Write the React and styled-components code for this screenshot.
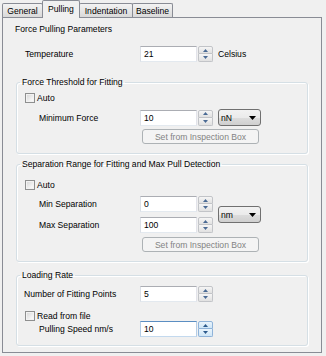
import React from "react";
import styled, { createGlobalStyle } from "styled-components";

const GlobalStyle = createGlobalStyle`
  html, body {
    margin: 0;
    padding: 0;
    background: #f0f0f0;
  }
  body {
    font-family: "Liberation Sans", Arial, sans-serif;
    font-size: 8.6px;
    color: #000;
  }
`;

const Window = styled.div`
  width: 326px;
  height: 356px;
  box-sizing: border-box;
  padding-left: 2px;
  overflow: hidden;
`;

const TabStrip = styled.div`
  display: flex;
  align-items: flex-end;
  height: 17px;
`;

const Tab = styled.div`
  box-sizing: border-box;
  width: ${p => p.w}px;
  height: ${p => (p.active ? 18 : 14)}px;
  margin-bottom: ${p => (p.active ? -1 : 0)}px;
  margin-left: ${p => (p.first ? 0 : -1)}px;
  border: 1px solid #898c95;
  border-bottom: none;
  border-radius: 2px 2px 0 0;
  background: ${p =>
    p.active ? "#f0f0f0" : "linear-gradient(#f3f3f3, #e6e6e6 50%, #d9d9d9)"};
  position: relative;
  z-index: ${p => (p.active ? 2 : 1)};
  display: flex;
  align-items: center;
  justify-content: center;
  padding-bottom: ${p => (p.active ? 2 : 0)}px;
  white-space: nowrap;
`;

const Panel = styled.div`
  box-sizing: border-box;
  width: 320px;
  height: 336px;
  border: 1px solid #898c95;
  background: #f0f0f0;
  padding-top: 5px;
`;

const SectionTitle = styled.div`
  padding-left: 12px;
  line-height: 12px;
`;

const Group = styled.fieldset`
  margin: ${p => p.mt}px 13px 0 13px;
  padding: 0 0 ${p => p.pb}px 0;
  border: 1px solid #d5dfe5;
  border-radius: 3px;
  box-shadow: inset 1px 1px 0 #fff, 1px 1px 0 #fff;
  min-width: 0;
`;

const Legend = styled.legend`
  margin-left: 3px;
  padding: 0 2px;
  line-height: 12px;
`;

const Row = styled.div`
  display: flex;
  align-items: center;
  height: ${p => p.h || 16}px;
  margin-top: ${p => p.mt || 0}px;
`;

const Label = styled.span`
  box-sizing: border-box;
  width: ${p => p.w}px;
  padding-left: ${p => p.indent}px;
  white-space: nowrap;
`;

const SpinBox = styled.div`
  display: flex;
  height: 16px;
`;

const SpinInput = styled.div`
  box-sizing: border-box;
  width: 57px;
  height: 16px;
  padding-left: 3px;
  line-height: 14px;
  background: #fff;
  border: 1px solid;
  border-color: ${p =>
    p.focused ? "#5b8ec2 #b5cde6 #c3d9ee #b5cde6" : "#abadb3 #e2e3ea #e3e9ef #dbdfe6"};
`;

const SpinButtons = styled.div`
  display: flex;
  flex-direction: column;
  width: 15px;
  margin-left: 1px;
  height: 16px;
`;

const SpinHalf = styled.div`
  box-sizing: border-box;
  height: 8px;
  border: 1px solid ${p => (p.focused ? "#8fb3d9" : "#c2c4c8")};
  border-top-width: ${p => (p.down ? 0 : 1)}px;
  border-radius: ${p => (p.down ? "0 0 2px 2px" : "2px 2px 0 0")};
  background: ${p =>
    p.focused
      ? "linear-gradient(#eaf4fc, #cfe6f7)"
      : "linear-gradient(#f6f6f6, #e1e1e1)"};
  display: flex;
  align-items: center;
  justify-content: center;
`;

const Unit = styled.span`
  margin-left: 5px;
`;

const Select = styled.div`
  box-sizing: border-box;
  width: 43px;
  height: 17px;
  margin-left: 5px;
  border: 1px solid #707070;
  border-radius: 3px;
  background: linear-gradient(#f2f2f2, #ebebeb 50%, #dddddd 51%, #cfcfcf);
  display: flex;
  align-items: center;
  justify-content: space-between;
  padding: 0 4px 0 2px;
`;

const Button = styled.div`
  box-sizing: border-box;
  width: 117px;
  height: 15px;
  margin: ${p => p.mt}px 0 0 125px;
  border: 1px solid #adb2b5;
  border-radius: 3px;
  background: #f4f4f4;
  color: #838383;
  display: flex;
  align-items: center;
  justify-content: center;
  white-space: nowrap;
`;

const CheckRow = styled.label`
  display: flex;
  align-items: center;
  height: ${p => p.h || 12}px;
  margin-top: ${p => p.mt}px;
  padding-left: 8px;
  gap: 2px;
`;

const CheckBox = styled.span`
  box-sizing: border-box;
  width: 10px;
  height: 10px;
  border: 1px solid #8e8f8f;
  background: linear-gradient(135deg, #d4d4d4, #f4f4f4 70%, #fff);
  box-shadow: inset 0 0 0 1px #f2f2f2;
`;

const PairRow = styled.div`
  display: flex;
  align-items: center;
  margin-top: ${p => p.mt}px;
`;

const PairColumn = styled.div`
  display: flex;
  flex-direction: column;
  gap: 5px;
`;

function Arrow({ down, focused }) {
  const c = focused ? "#2c5a8c" : "#4a6a94";
  return (
    <svg width="5" height="3" viewBox="0 0 5 3">
      <path d={down ? "M0 0 H5 L2.5 3 Z" : "M0 3 H5 L2.5 0 Z"} fill={c} />
    </svg>
  );
}

function Spin({ value, focused }) {
  return (
    <SpinBox>
      <SpinInput focused={focused}>{value}</SpinInput>
      <SpinButtons>
        <SpinHalf focused={focused}>
          <Arrow focused={focused} />
        </SpinHalf>
        <SpinHalf down focused={focused}>
          <Arrow down focused={focused} />
        </SpinHalf>
      </SpinButtons>
    </SpinBox>
  );
}

function Dropdown({ value }) {
  return (
    <Select>
      <span>{value}</span>
      <svg width="7" height="4" viewBox="0 0 7 4">
        <path d="M0 0 H7 L3.5 4 Z" fill="#000" />
      </svg>
    </Select>
  );
}

function Check({ label, mt, h }) {
  return (
    <CheckRow mt={mt} h={h}>
      <CheckBox />
      <span>{label}</span>
    </CheckRow>
  );
}

export default function App() {
  return (
    <Window>
      <GlobalStyle />
      <TabStrip>
        <Tab first w={41}>General</Tab>
        <Tab active w={38}>Pulling</Tab>
        <Tab w={54}>Indentation</Tab>
        <Tab w={41}>Baseline</Tab>
      </TabStrip>
      <Panel>
        <SectionTitle>Force Pulling Parameters</SectionTitle>
        <Row mt={11}>
          <Label indent={22} w={137}>Temperature</Label>
          <Spin value="21" />
          <Unit>Celsius</Unit>
        </Row>

        <Group mt={14} pb={9}>
          <Legend>Force Threshold for Fitting</Legend>
          <Check label="Auto" mt={4} />
          <Row mt={5} h={17}>
            <Label indent={22} w={123}>Minimum Force</Label>
            <Spin value="10" />
            <Dropdown value="nN" />
          </Row>
          <Button mt={3}>Set from Inspection Box</Button>
        </Group>

        <Group mt={4} pb={9}>
          <Legend>Separation Range for Fitting and Max Pull Detection</Legend>
          <Check label="Auto" mt={9} />
          <PairRow mt={5}>
            <PairColumn>
              <Row>
                <Label indent={22} w={123}>Min Separation</Label>
                <Spin value="0" />
              </Row>
              <Row>
                <Label indent={22} w={123}>Max Separation</Label>
                <Spin value="100" />
              </Row>
            </PairColumn>
            <Dropdown value="nm" />
          </PairRow>
          <Button mt={4}>Set from Inspection Box</Button>
        </Group>

        <Group mt={7} pb={8}>
          <Legend>Loading Rate</Legend>
          <Row mt={5}>
            <Label indent={7} w={123}>Number of Fitting Points</Label>
            <Spin value="5" />
          </Row>
          <Check label="Read from file" mt={9} h={10} />
          <Row>
            <Label indent={22} w={123}>Pulling Speed nm/s</Label>
            <Spin value="10" focused />
          </Row>
        </Group>
      </Panel>
    </Window>
  );
}
